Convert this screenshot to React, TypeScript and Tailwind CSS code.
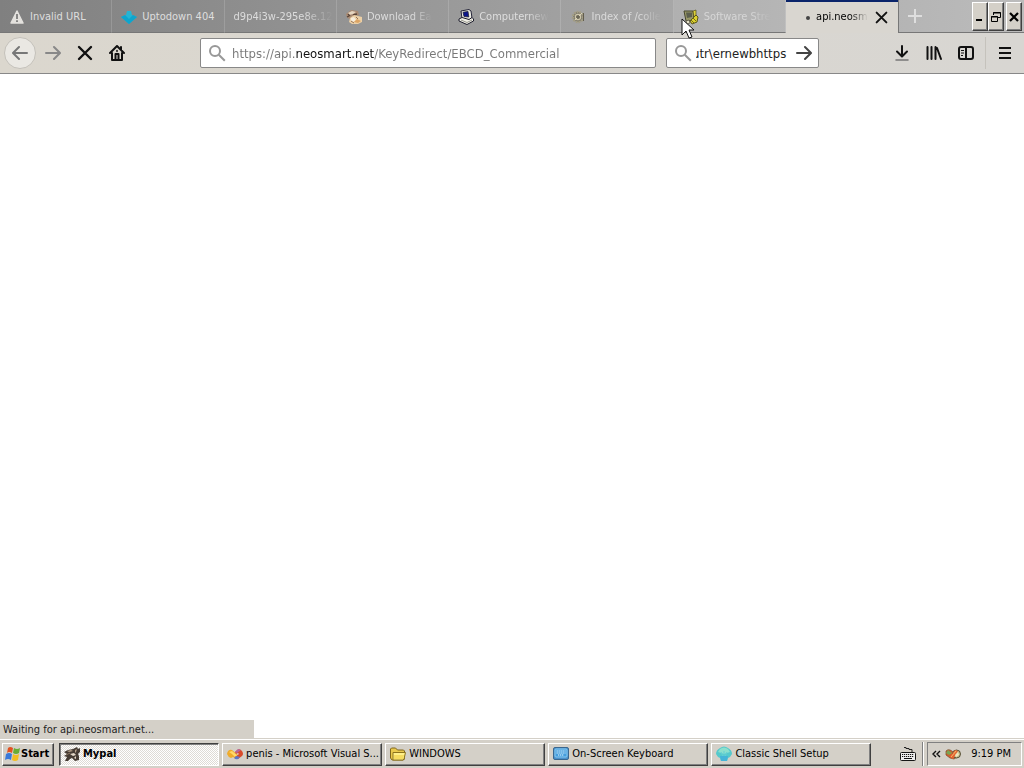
import * as React from "react";
import { clsx } from "clsx";

const tabs: { title: string; icon: React.ReactNode; tone: string; fade?: boolean }[] = [
  { title: "Invalid URL", icon: <WarningIcon />, tone: "text-[#dedede]" },
  { title: "Uptodown 404", icon: <UptodownIcon />, tone: "text-[#dedede]" },
  { title: "d9p4i3w-295e8e.12", icon: null, tone: "text-[#dcdcdc]", fade: true },
  { title: "Download Ea", icon: <DownloadSiteIcon />, tone: "text-[#dcdcdc]", fade: true },
  { title: "Computernew", icon: <ComputerIcon />, tone: "text-[#dedede]", fade: true },
  { title: "Index of /colle", icon: <WheelIcon />, tone: "text-[#dadada]", fade: true },
  { title: "Software Stre", icon: <SoftwareIcon />, tone: "text-[#d6d6d6]", fade: true },
];

const tasks: { title: string; icon: React.ReactNode; active?: boolean }[] = [
  { title: "Mypal", icon: <MypalIcon />, active: true },
  { title: "penis - Microsoft Visual S...", icon: <StudioIcon /> },
  { title: "WINDOWS", icon: <FolderIcon /> },
  { title: "On-Screen Keyboard", icon: <OskIcon /> },
  { title: "Classic Shell Setup", icon: <ShellIcon /> },
];

const raised =
  "border border-t-white border-l-white border-r-[#404040] border-b-[#404040] shadow-[inset_-1px_-1px_0_#808080]";

function Svg({ children, size = 16 }: { children: React.ReactNode; size?: number }) {
  return (
    <svg width={size} height={size} viewBox="0 0 16 16" className="shrink-0" aria-hidden="true">
      {children}
    </svg>
  );
}

function WarningIcon() {
  return (
    <Svg>
      <path d="M8 2 14 14H2Z" fill="#e4e2de" stroke="#e4e2de" strokeWidth="1.5" strokeLinejoin="round" />
      <path d="M8 5v5M8 11.3v1.7" stroke="#7c7c7c" strokeWidth="1.8" />
    </Svg>
  );
}

function UptodownIcon() {
  return (
    <Svg>
      <path d="m0 8 5-2 1-4h4l1 4 5 2-8 7Z" fill="#25b4d3" />
      <path d="m0 8 4-2 4 4 4-4 4 2-8 7Z" fill="#0fa4cc" />
    </Svg>
  );
}

function DownloadSiteIcon() {
  return (
    <Svg>
      <path d="M0 5 5 1l7 1 1 4-4 1-6 3-2-2Z" fill="#a98a72" />
      <path d="m2 4 4-2 4 1-3 2-4 1Z" fill="#e6d6c1" />
      <path d="m1 8 2-1m4-1 4-1M2 5l2 2" stroke="#5a4336" strokeWidth="1.3" />
      <path d="m4 9 4-3 4 1 4 1v5l-4 2H6l-3-2Z" fill="#ecd0a6" />
      <path d="m5 9 3-1 2 3-3 2-2-1Z" fill="#f7eddc" />
      <path d="m8 13 3-3 4 2-3 2Z" fill="#dca565" />
      <path d="m10 8 2 2m-7 2 3 2" stroke="#957052" />
    </Svg>
  );
}

function ComputerIcon() {
  return (
    <Svg>
      <path d="m3 2 8-1.5L13 2l1 7-3 2-7-1.5Z" fill="#ecece4" stroke="#25253a" />
      <path d="m5 3.3 5-.9.8 5.6L6 7.5Z" fill="#0c168c" stroke="#27273a" strokeWidth=".8" />
      <path d="m1 10 3-1.5 7 2 3-2 1.5 1.5v2L9 15.5l-8-3.5Z" fill="#f1f0e6" stroke="#1c1c2c" />
      <path d="m3 11 6 2.5 5-2.5" fill="none" stroke="#96968e" />
    </Svg>
  );
}

function WheelIcon() {
  return (
    <Svg>
      <circle cx="8" cy="8" r="5" fill="#7d796a" />
      <circle cx="8" cy="8" r="5" fill="none" stroke="#a39d84" strokeWidth="2.4" strokeDasharray="1.8 .9" />
      <circle cx="8" cy="8" r="2.6" fill="#6b6757" stroke="#cfc8ad" strokeWidth="1.1" />
      <path d="m5 11 2-2m2-2 3-3" stroke="#dad3b9" />
      <path d="M13.5 4v8" stroke="#615c4c" />
    </Svg>
  );
}

function SoftwareIcon() {
  return (
    <Svg>
      <path d="M1 2h9l1 9-8 1Z" fill="#989866" stroke="#47472f" />
      <path d="M3 3.5h6V8l-5 1Z" fill="#5b5e4e" />
      <path d="m3 12 3-1 1 3-3 1Z" fill="#e5e2c9" stroke="#55503d" strokeWidth=".7" />
      <path d="m10 2 3-1v6l-2 1Z" fill="#ded23a" stroke="#55501a" strokeWidth=".7" />
      <path d="m7 12 6-6 2 2-1 5-5 2Z" fill="#ddd22b" stroke="#5b571f" />
      <path d="m8 11 3 3m-1-5 3 3" stroke="#6e681e" />
    </Svg>
  );
}

function MypalIcon() {
  return (
    <Svg>
      <path d="m0 6 4-2 5-1 4-2 1 2 2-1v4l-2 2 1 2v4l-4 1-3-3-2 1-2 2H1l2-4-3-1 3-2Z" fill="#463c34" />
      <path d="m3 5 4-1 2 1-4 1Zm8-1 2-1-1 3-1 1Z" fill="#b5a08b" />
      <path d="m6 8 4-1 2 2-3 1Zm4 4 2-2v3Z" fill="#e4d8c8" />
      <path d="m2 9 4-2" stroke="#8d7763" fill="none" />
    </Svg>
  );
}

function StudioIcon() {
  return (
    <Svg>
      <path d="M0 8q1-5 5-4l7 6-3 3-3-2-2 1q-3-1-4-4Z" fill="#efab2b" />
      <path d="m2 6 3-1 6 5-2 2-4-4Z" fill="#ffd869" />
      <path d="M8 6q4-5 7-1 2 3 0 5l-4 3-3-2 4-3-1-1-2 1Z" fill="#d94b2b" />
      <path d="m8 6 3-3 3 1-4 3Z" fill="#b5659b" />
      <path d="m7 12 2-2 4 1-2 2q-2 1-4-1Z" fill="#5a76c8" />
    </Svg>
  );
}

function FolderIcon() {
  return (
    <Svg>
      <path d="M.5 12V3l1-1h4l2 2h6l1 1v8l-1 1H2Z" fill="#e9c94d" stroke="#80671e" />
      <path d="M3 6.5h12.5L14 13l-1 1H3Z" fill="#fff08a" stroke="#8d741d" />
      <path d="M4 9h10l-1 4H4Z" fill="#f6dc60" />
    </Svg>
  );
}

function OskIcon() {
  return (
    <Svg>
      <rect x=".5" y="1.5" width="15" height="12" rx="1.5" fill="#4a91cc" stroke="#3a678f" />
      <rect x="2" y="3" width="12" height="8" rx="1" fill="#459ddd" stroke="#8bcbf0" />
      <path d="M3.5 5h9M3.5 7h9M5 9h6" stroke="#e9faff" strokeWidth="1.2" strokeDasharray="1.3 .7" />
    </Svg>
  );
}

function ShellIcon() {
  return (
    <Svg>
      <path d="M4 2q4-3 8 0 4 2 4 6l-2 3-2 1-1 3H5l-1-3-2-1-2-3q0-4 4-6Z" fill="#55c9cc" />
      <path d="M4 3q4-3 8 0l2 3-6 2-6-2Z" fill="#8ce0cd" />
      <path d="M8 13 5 6m3 7V5m0 8 3-7" stroke="#62cfd5" />
      <path d="M4 10h8l-1 5H5Z" fill="#45b4d8" />
    </Svg>
  );
}

function WindowsIcon() {
  return (
    <Svg>
      <path d="M3 2q2-2 5 0L7 7Q4 5 2 7Z" fill="#e25222" />
      <path d="M9 2q3 2 6 0l-1 5q-3 2-6 0Z" fill="#68ad35" />
      <path d="M1 8q3-2 6 0l-1 6q-3-2-6 0Z" fill="#3979d9" />
      <path d="M8 8q3 2 6 0l-1 6q-3 2-6 0Z" fill="#f3bd20" />
    </Svg>
  );
}

function TrayKeyboardIcon() {
  return (
    <svg width="16" height="16" viewBox="0 0 16 16" className="shrink-0" aria-hidden="true">
      <path d="M4 1.5h2v1h3v1h3V6" fill="none" stroke="#222" />
      <rect x=".5" y="6.5" width="15" height="8" rx="1" fill="#eee" stroke="#161616" />
      <path d="M2 8.5h12M2 10.5h12" stroke="#111" strokeWidth="1.2" strokeDasharray="1.2 .8" />
      <path d="M4 12.5h8" stroke="#111" />
    </svg>
  );
}

function TrayIcon() {
  return (
    <Svg>
      <path d="M1 5q3-3 7 1l4 5-3 2-4-1-4-3Z" fill="#d35b30" stroke="#73502a" strokeWidth=".7" />
      <circle cx="11.5" cy="8" r="4" fill="#c3bc8b" stroke="#574f37" />
      <path d="m3 4 4 3-3 2-3-2Z" fill="#78a653" />
      <path d="m5 11 5-7 3 1-5 8Z" fill="#e66330" />
      <path d="m10 9 3-3 1 3-3 2Z" fill="#eee7bd" />
      <path d="m6 11 5-6" stroke="#f5b767" />
    </Svg>
  );
}

function Magnifier() {
  return (
    <svg width="17" height="18" viewBox="0 0 17 18" className="shrink-0" fill="none" stroke="#989898" strokeWidth="2" aria-hidden="true">
      <circle cx="6" cy="7" r="5" />
      <path d="m9.8 10.8 6 6" />
    </svg>
  );
}

function Arrow({ left = false, color = "#777" }: { left?: boolean; color?: string }) {
  return (
    <svg width="16" height="16" viewBox="0 0 16 16" fill="none" stroke={color} strokeWidth="2" strokeLinecap="round" strokeLinejoin="round" aria-hidden="true">
      <path d={left ? "M15 8H1.5M7 2 1 8l6 6" : "M1 8h13.5M9 2l6 6-6 6"} />
    </svg>
  );
}

function Cross({ size = 16 }: { size?: number }) {
  return (
    <svg width={size} height={size} viewBox="0 0 16 16" stroke="#111" strokeWidth="2.4" strokeLinecap="round" aria-hidden="true">
      <path d="m2 2 12 12M14 2 2 14" />
    </svg>
  );
}

const WindowButton = ({ label, children }: { label: string; children: React.ReactNode }) => (
  <button
    aria-label={label}
    className={clsx("flex h-[29px] w-4 items-center justify-center bg-[#d4d0c8]", raised)}
  >
    <svg width="12" height="12" viewBox="0 0 12 12" className="shrink-0" fill="none" stroke="#000" aria-hidden="true">
      {children}
    </svg>
  </button>
);

const TabBar = () => (
  <header className="relative flex h-[33px] shrink-0 bg-linear-to-r from-[#808080] to-[#bcbcbc]">
    <div role="tablist" className="grid min-w-0 flex-[901] grid-cols-8">
      {tabs.map((tab, i) => (
        <button
          key={tab.title}
          role="tab"
          aria-selected={false}
          className={clsx(
            "flex min-w-0 items-center gap-[5px] border-r border-b border-r-white/15 border-b-[#777] pt-0.5 pl-[9px] text-left",
            tab.tone,
            i === 6 && "bg-white/10"
          )}
        >
          {tab.icon}
          <span
            className={clsx(
              "whitespace-nowrap",
              tab.fade && "mask-r-from-70% mask-r-to-100%"
            )}
          >
            {tab.title}
          </span>
        </button>
      ))}
      <div className="flex min-w-0 items-center border-t-2 border-t-[#0a246a] bg-[#d9d6d0] pr-2.5">
        <button role="tab" aria-selected="true" className="flex min-w-0 flex-1 items-center gap-1.5 pl-5 text-left text-black">
          <span className="size-1 shrink-0 rounded-full bg-[#444]" />
          <span className="whitespace-nowrap mask-r-from-65% mask-r-to-100%">api.neosm</span>
        </button>
        <button aria-label="Close tab" className="shrink-0">
          <Cross size={13} />
        </button>
      </div>
    </div>
    <div className="flex flex-[123] justify-between border-b border-l border-[#777] pr-0.5">
      <button aria-label="New tab" className="px-[9px]">
        <svg width="14" height="14" viewBox="0 0 14 14" stroke="#dedede" strokeWidth="2" aria-hidden="true">
          <path d="M7 0v14M0 7h14" />
        </svg>
      </button>
      <div className="flex pt-0.5">
        <WindowButton label="Minimize">
          <path d="M2 9h6" strokeWidth="2" />
        </WindowButton>
        <WindowButton label="Restore">
          <path d="M3.5 4V1.5h7v5H8M3 2h8M1.5 5.5h6v5h-6ZM1 6h7" />
        </WindowButton>
        <div className="ml-0.5">
          <WindowButton label="Close">
            <path d="m2 2 8 8M10 2 2 10" strokeWidth="2.2" />
          </WindowButton>
        </div>
      </div>
    </div>
    <svg width="14" height="22" viewBox="0 0 14 22" className="absolute top-[18px] left-[66.5%]" aria-hidden="true">
      <path d="M1 1v16l4-4 3 7 3-1-3-7h5Z" fill="#fff" stroke="#111" />
    </svg>
  </header>
);

const Toolbar = () => (
  <nav className="flex h-[41px] shrink-0 items-center border-b border-[#888] bg-linear-to-r from-[#dbd7ce] to-[#d8d6d2]">
    <button aria-label="Back" className="ml-1 flex size-8 items-center justify-center rounded-full border border-[#c4c1ba] bg-[#eae8e3]">
      <Arrow left />
    </button>
    <button aria-label="Forward" className="ml-[9px]">
      <Arrow color="#888" />
    </button>
    <button aria-label="Stop" className="ml-4">
      <Cross />
    </button>
    <button aria-label="Home" className="ml-4">
      <svg width="16" height="16" viewBox="0 0 16 16" fill="none" stroke="#111" strokeWidth="2" strokeLinejoin="round" strokeLinecap="round" aria-hidden="true">
        <path d="m1 8 7-7 7 7M3 8v7h10V8M12 2v3" />
        <path d="M6.5 14V9h3v5" />
        <path d="M8 5.5v1" strokeWidth="1.5" />
      </svg>
    </button>
    <div className="ml-[75px] flex h-[30px] min-w-0 flex-[446] items-center rounded-xs border border-[#888] bg-white pl-2">
      <Magnifier />
      <input
        aria-label="Address"
        spellCheck={false}
        defaultValue="https://api.neosmart.net/KeyRedirect/EBCD_Commercial"
        className="ml-1.5 min-w-0 flex-1 bg-linear-[90deg,#777_64px,#111_64px,#111_142px,#777_142px] bg-clip-text pt-0.5 text-[13px] text-transparent outline-none"
      />
    </div>
    <div className="ml-2.5 flex h-[30px] min-w-0 flex-[137] items-center rounded-xs border border-[#888] bg-white pr-1.5 pl-2">
      <Magnifier />
      <input
        aria-label="Search"
        spellCheck={false}
        defaultValue="utr\ernewbhttps"
        className="ml-1 min-w-0 flex-1 -indent-1 pt-0.5 text-[13px] text-[#222] outline-none"
      />
      <button aria-label="Go">
        <Arrow color="#444" />
      </button>
    </div>
    <div className="ml-[75px] flex items-center gap-4 text-[#111]">
      <button aria-label="Downloads">
        <svg width="16" height="16" viewBox="0 0 16 16" fill="none" stroke="currentColor" strokeWidth="2" strokeLinecap="round" strokeLinejoin="round" aria-hidden="true">
          <path d="M8 1v10M3 6.5l5 5 5-5" />
          <path d="M2 15h12" stroke="#777" strokeWidth="1.5" />
        </svg>
      </button>
      <button aria-label="Library">
        <svg width="16" height="16" viewBox="0 0 16 16" fill="none" stroke="currentColor" strokeWidth="2" strokeLinecap="round" aria-hidden="true">
          <path d="M1.5 2v12M5.5 2v12M9.5 2v12M11 3l4 11" />
        </svg>
      </button>
      <button aria-label="Sidebars">
        <svg width="16" height="16" viewBox="0 0 16 16" fill="none" stroke="currentColor" strokeWidth="2" aria-hidden="true">
          <rect x="1" y="2" width="14" height="12" rx="2" />
          <path d="M8 2v12" />
          <path d="M3 5.5h3M3 8h3M3 10.5h2" strokeWidth="1" />
        </svg>
      </button>
    </div>
    <button aria-label="Open menu" className="ml-[11px] flex h-8 items-center border-l border-[#c5c2bc] px-3">
      <svg width="14" height="14" viewBox="0 0 14 14" stroke="#111" strokeWidth="2" aria-hidden="true">
        <path d="M1 2h12M1 7h12M1 12h12" />
      </svg>
    </button>
  </nav>
);

const Taskbar = () => (
  <footer className="flex h-[30px] shrink-0 items-center border-t border-[#d4d0c8] bg-[#d4d0c8] pt-px pl-0.5 shadow-[inset_0_1px_0_#fff]">
    <button className={clsx("flex h-[23px] w-[52px] shrink-0 items-center pl-0.5 font-bold", raised)}>
      <WindowsIcon />
      Start
    </button>
    <div className="ml-[5px] flex min-w-0 flex-[815] gap-[3px]">
      {tasks.map((task) => (
        <button
          key={task.title}
          className={clsx(
            "flex h-[23px] min-w-0 flex-1 items-center gap-[3px] pl-1",
            task.active
              ? "border border-t-[#404040] border-r-white border-b-white border-l-[#404040] bg-[repeating-conic-gradient(#fff_0_25%,#dedbd5_0_50%)] bg-size-[2px_2px] font-bold shadow-[inset_1px_1px_0_#808080]"
              : raised
          )}
        >
          {task.icon}
          <span className="truncate">{task.title}</span>
        </button>
      ))}
    </div>
    <div className="flex flex-[151] items-center justify-end pr-0.5">
      <TrayKeyboardIcon />
      <div className="ml-1.5 h-6 w-0.5 border-l border-l-[#808080] bg-white" />
      <div className="ml-[3px] flex h-6 items-center gap-1 border border-t-[#808080] border-r-white border-b-white border-l-[#808080] pr-2.5 pl-1">
        <button aria-label="Show hidden icons">
          <svg width="9" height="8" viewBox="0 0 9 8" fill="none" stroke="#111" strokeWidth="1.4" aria-hidden="true">
            <path d="M4 1 1 4l3 3M8 1 5 4l3 3" />
          </svg>
        </button>
        <TrayIcon />
        <time className="ml-1.5 whitespace-nowrap">9:19 PM</time>
      </div>
    </div>
  </footer>
);

export default function App() {
  return (
    <div className="flex h-screen flex-col overflow-hidden bg-white font-['DejaVu_Sans_Condensed','DejaVu_Sans',sans-serif] text-[11px] text-black">
      <TabBar />
      <Toolbar />
      <main className="flex min-h-0 flex-1 flex-col justify-end">
        <p role="status" className="h-[18px] w-[254px] bg-[#d4d0c8] pl-[3px] leading-[20px] text-[#222]">
          Waiting for api.neosmart.net...
        </p>
      </main>
      <Taskbar />
    </div>
  );
}
